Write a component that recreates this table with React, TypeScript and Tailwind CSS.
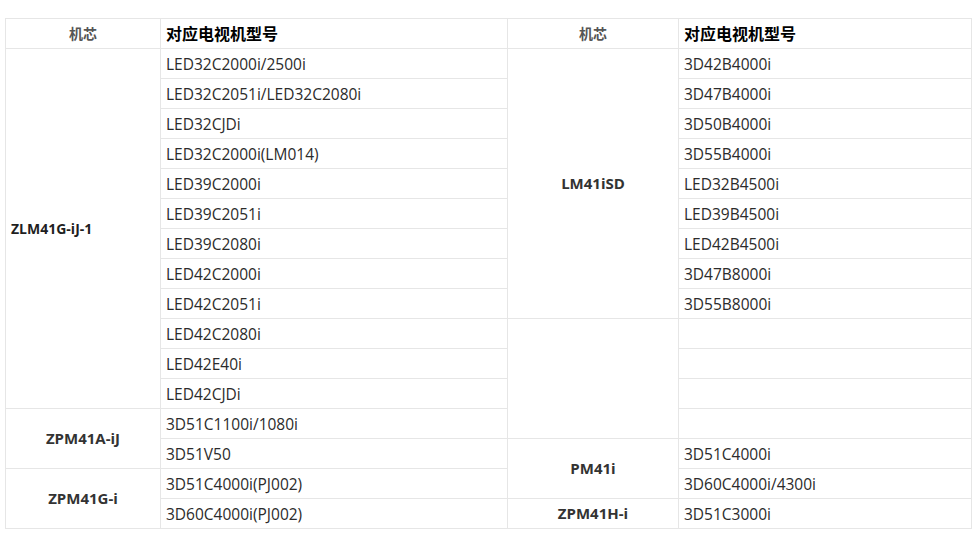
const font = {
  fontFamily: '"Open Sans", "Noto Sans CJK SC", sans-serif',
};

const leftRows: string[] = [
  "LED32C2000i/2500i",
  "LED32C2051i/LED32C2080i",
  "LED32CJDi",
  "LED32C2000i(LM014)",
  "LED39C2000i",
  "LED39C2051i",
  "LED39C2080i",
  "LED42C2000i",
  "LED42C2051i",
  "LED42C2080i",
  "LED42E40i",
  "LED42CJDi",
  "3D51C1100i/1080i",
  "3D51V50",
  "3D51C4000i(PJ002)",
  "3D60C4000i(PJ002)",
];

const rightRows: string[] = [
  "3D42B4000i",
  "3D47B4000i",
  "3D50B4000i",
  "3D55B4000i",
  "LED32B4500i",
  "LED39B4500i",
  "LED42B4500i",
  "3D47B8000i",
  "3D55B8000i",
  "",
  "",
  "",
  "",
  "3D51C4000i",
  "3D60C4000i/4300i",
  "3D51C3000i",
];

// chip cells: [rowSpan, label, left-aligned?]
const leftChips: Record<number, [number, string, boolean]> = {
  0: [12, "ZLM41G-iJ-1", true],
  12: [2, "ZPM41A-iJ", false],
  14: [2, "ZPM41G-i", false],
};

const rightChips: Record<number, [number, string]> = {
  0: [9, "LM41iSD"],
  9: [4, ""],
  13: [2, "PM41i"],
  15: [1, "ZPM41H-i"],
};

export default function App() {
  return (
    <div className="w-[979px] h-[538px] bg-white pt-[18px] pl-[5px]" style={font}>
      <table className="w-[966px] border-collapse table-fixed text-[#2b2b2b]">
        <colgroup>
          <col className="w-[155px]" />
          <col className="w-[347px]" />
          <col className="w-[171px]" />
          <col className="w-[293px]" />
        </colgroup>
        <thead>
          <tr className="h-[30px]">
            <th className="border border-[#e6e6e6] text-center text-[14px] font-bold text-[#555]">
              机芯
            </th>
            <th className="border border-[#e6e6e6] text-left pl-[5px] text-[16px] font-bold text-black">
              对应电视机型号
            </th>
            <th className="border border-[#e6e6e6] text-center text-[14px] font-bold text-[#555]">
              机芯
            </th>
            <th className="border border-[#e6e6e6] text-left pl-[5px] text-[16px] font-bold text-black">
              对应电视机型号
            </th>
          </tr>
        </thead>
        <tbody>
          {leftRows.map((model, i) => {
            const lc = leftChips[i];
            const rc = rightChips[i];
            return (
              <tr key={i} className="h-[30px]">
                {lc && (
                  <td
                    rowSpan={lc[0]}
                    className={
                      lc[2]
                        ? "border border-[#e6e6e6] align-middle pl-[5px] text-left text-[14px] font-bold text-[#1f1f1f]"
                        : "border border-[#e6e6e6] align-middle text-center text-[15px] font-bold text-[#333]"
                    }
                  >
                    {lc[1]}
                  </td>
                )}
                <td className="border border-[#e6e6e6] pl-[5px] pt-[3px] text-[15.5px] leading-none">
                  {model}
                </td>
                {rc && (
                  <td
                    rowSpan={rc[0]}
                    className="border border-[#e6e6e6] align-middle text-center text-[15px] font-bold text-[#333]"
                  >
                    {rc[1]}
                  </td>
                )}
                <td className="border border-[#e6e6e6] pl-[5px] pt-[3px] text-[15.5px] leading-none">
                  {rightRows[i]}
                </td>
              </tr>
            );
          })}
        </tbody>
      </table>
    </div>
  );
}
